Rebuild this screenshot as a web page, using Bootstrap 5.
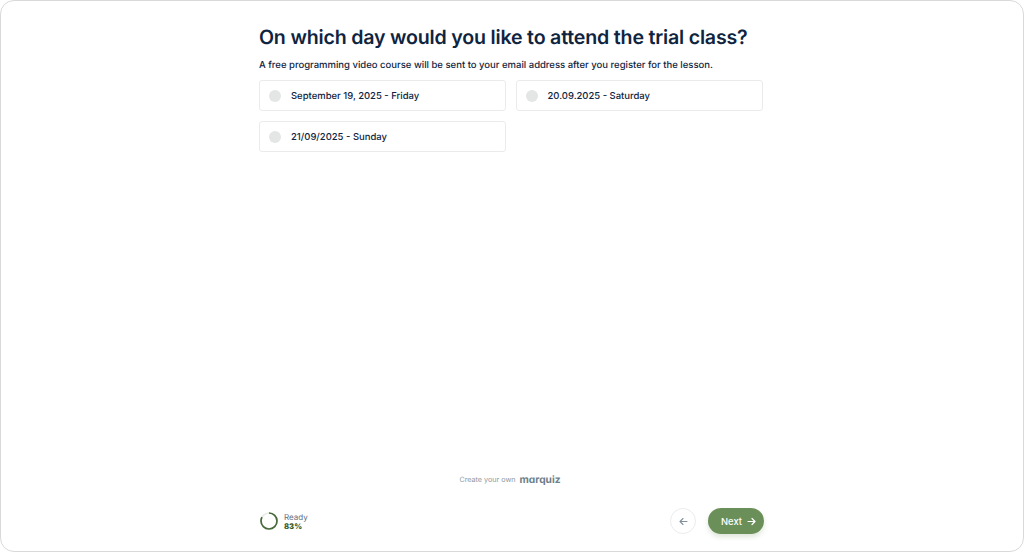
<!DOCTYPE html>
<html lang="en">
<head>
<meta charset="utf-8">
<meta name="viewport" content="width=device-width, initial-scale=1">
<title>Trial class</title>
<link href="https://cdn.jsdelivr.net/npm/bootstrap@5.3.0/dist/css/bootstrap.min.css" rel="stylesheet">
<style>
body{font-family:Inter,sans-serif;color:#0f2440;background:#fff;text-rendering:geometricPrecision}
.quiz-frame{height:100vh;border:1px solid #d9d9d9;border-radius:14px;overflow:hidden}
.quiz-body{width:504px;margin-left:258px;padding-top:23px}
.quiz-title{font-size:19.6px;line-height:26px;font-weight:600;letter-spacing:-.19px;white-space:nowrap;margin:0}
.quiz-lead{font-size:9.5px;line-height:14px;font-weight:500;margin:9px 0 7px;white-space:nowrap}
.options{display:grid;grid-template-columns:247px 247px;gap:10px 9.5px}
.option{height:31px;border:1px solid #e9ebed;border-radius:3px;padding-left:9px;gap:10px;font-size:9.48px;font-weight:500;white-space:nowrap;cursor:pointer}
.option span{padding-top:3px}
.option .form-check-input{width:12px;height:12px;margin:0;border:0;background-color:#e4e6e6}
.brand-line{font-size:7.2px;line-height:12px;color:#8d99a2;gap:4px;width:504px;margin-left:258px;height:12px;margin-bottom:21px;padding-right:2px}
.brand-line b{font-size:10.2px;font-weight:700;color:#6c808a;font-feature-settings:"cv11","ss03"}
.quiz-footer{width:505px;margin-left:258px;height:28px;margin-bottom:16px}
.ready{font-size:8px;line-height:9px;color:#5f7183;margin-left:5px;padding-top:1px}
.ready b{display:block;font-size:7.7px;font-weight:800;color:#35591d}
.back-btn{width:26px;height:26px;border:1px solid #e9ecee;color:#82919e;margin-right:12px}
.next-btn{width:56px;height:26px;background:#6b8f58;color:#fff;font-size:9.4px;font-weight:500;gap:5px;box-shadow:0 3px 5px #6b8f5838}
.next-btn:hover{background:#5d804b;color:#fff}
.next-btn span{padding-top:2px;padding-left:5px}
</style>
</head>
<body>
<main class="quiz-frame d-flex flex-column">
  <section class="quiz-body">
    <h1 class="quiz-title"><span>On which day would you like to attend the trial class?</span></h1>
    <p class="quiz-lead"><span>A free programming video course will be sent to your email address after you register for the lesson.</span></p>
    <div class="options">
      <label class="option d-flex align-items-center"><input class="form-check-input" type="radio" name="day"><span>September 19, 2025 - Friday</span></label>
      <label class="option d-flex align-items-center"><input class="form-check-input" type="radio" name="day"><span>20.09.2025 - Saturday</span></label>
      <label class="option d-flex align-items-center"><input class="form-check-input" type="radio" name="day"><span>21/09/2025 - Sunday</span></label>
    </div>
  </section>
  <div class="brand-line d-flex align-items-center justify-content-center mt-auto"><span>Create your own</span><b>marquiz</b></div>
  <footer class="quiz-footer d-flex align-items-center">
    <svg class="flex-shrink-0 ms-0" width="20" height="20" viewBox="0 0 20 20" fill="none" stroke-width="1.7">
      <circle cx="10" cy="10" r="8" stroke="#e7ece4"/>
      <circle cx="10" cy="10" r="8" stroke="#48693a" pathLength="100" stroke-dasharray="83 17" transform="rotate(-90 10 10)"/>
    </svg>
    <div class="ready"><span>Ready</span><b>83%</b></div>
    <button class="btn back-btn rounded-circle p-0 d-flex align-items-center justify-content-center ms-auto" aria-label="Back">
      <svg width="9" height="9" viewBox="0 0 9 9" fill="none" stroke="currentColor" stroke-width="1.1" stroke-linecap="round" stroke-linejoin="round"><path d="M8 4.5H1M4 1.5l-3 3 3 3"/></svg>
    </button>
    <button class="btn next-btn rounded-pill border-0 p-0 d-flex align-items-center justify-content-center">
      <span>Next</span>
      <svg width="9" height="9" viewBox="0 0 9 9" fill="none" stroke="currentColor" stroke-width="1.2" stroke-linecap="round" stroke-linejoin="round"><path d="M1 4.5h7M5 1.5l3 3-3 3"/></svg>
    </button>
  </footer>
</main>
<script src="https://cdn.jsdelivr.net/npm/bootstrap@5.3.0/dist/js/bootstrap.bundle.min.js"></script>
</body>
</html>
